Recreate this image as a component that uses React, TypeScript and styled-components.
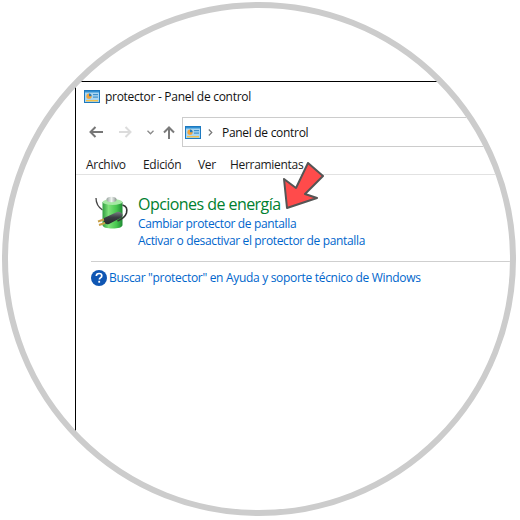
import * as React from "react";
import styled, { createGlobalStyle } from "styled-components";

const GlobalStyle = createGlobalStyle`
  html, body {
    margin: 0;
    background: #fff;
  }
`;

const FONT = `"Open Sans", "Noto Sans", "Liberation Sans", sans-serif`;

const PanelIcon: React.FC = () => (
  <svg width="16" height="13" viewBox="0 0 16 13">
    <rect x="0.5" y="0.5" width="15" height="12" fill="#a9d6f2" stroke="#1c79c0" />
    <rect x="1" y="1" width="14" height="1.5" fill="#2f8fd2" />
    <circle cx="5" cy="6.2" r="2.6" fill="#f2a33a" />
    <path d="M5 6.2V3.6a2.6 2.6 0 0 1 2.6 2.6z" fill="#1c79c0" />
    <rect x="9" y="4" width="5" height="1.2" fill="#3f8fc9" />
    <rect x="9" y="6.5" width="5" height="1.2" fill="#3f8fc9" />
    <rect x="2" y="10" width="12" height="1.4" fill="#f2c14a" />
  </svg>
);

const ArrowLeft: React.FC<{ color: string }> = ({ color }) => (
  <svg width="14" height="12" viewBox="0 0 14 12" fill="none" stroke={color} strokeWidth="2">
    <path d="M14 6H1.5M6.5 1 1.5 6l5 5" />
  </svg>
);

const ArrowRight: React.FC<{ color: string }> = ({ color }) => (
  <svg width="13" height="12" viewBox="0 0 13 12" fill="none" stroke={color} strokeWidth="2">
    <path d="M0 6h11.5M6.5 1l5 5-5 5" />
  </svg>
);

const ChevronDown: React.FC = () => (
  <svg width="7" height="5" viewBox="0 0 7 5" fill="none" stroke="#8a8a8a" strokeWidth="1.3">
    <path d="M.5 .8l3 3 3-3" />
  </svg>
);

const ArrowUp: React.FC = () => (
  <svg width="12" height="13" viewBox="0 0 12 13" fill="none" stroke="#7a7a7a" strokeWidth="2">
    <path d="M6 13V1.5M1 6.5l5-5 5 5" />
  </svg>
);

const CrumbChevron: React.FC = () => (
  <svg width="5" height="7" viewBox="0 0 5 7" fill="none" stroke="#777" strokeWidth="1.2">
    <path d="M.8 .5l3 3-3 3" />
  </svg>
);

const BatteryIcon: React.FC = () => (
  <svg width="36" height="36" viewBox="0 0 36 36">
    <defs>
      <linearGradient id="cell" x1="0" x2="1" y1="0" y2="0">
        <stop offset="0" stopColor="#2f9e3f" />
        <stop offset="0.3" stopColor="#7fe27a" />
        <stop offset="0.7" stopColor="#46c64e" />
        <stop offset="1" stopColor="#1f8a34" />
      </linearGradient>
      <linearGradient id="cap" x1="0" x2="1" y1="0" y2="0">
        <stop offset="0" stopColor="#9aa5a0" />
        <stop offset="0.5" stopColor="#eef2ef" />
        <stop offset="1" stopColor="#8b9690" />
      </linearGradient>
      <linearGradient id="plug" x1="0" x2="0" y1="0" y2="1">
        <stop offset="0" stopColor="#777e82" />
        <stop offset="0.45" stopColor="#3a3f42" />
        <stop offset="1" stopColor="#26292b" />
      </linearGradient>
    </defs>
    <path d="M3 5c0 6 2 9 6.5 12" fill="none" stroke="#444" strokeWidth="1.3" />
    <path d="M9.5 9v23c0 2.5 4.5 3.5 10 3.5s10-1 10-3.5V9z" fill="url(#cell)" />
    <ellipse cx="19.5" cy="9" rx="10" ry="3" fill="#a6e8a4" />
    <ellipse cx="18.5" cy="6.5" rx="5" ry="2.8" fill="url(#cap)" />
    <path d="M29.5 12c4 1 5 4 4 8-1 3-4 6-9 8" fill="none" stroke="#333" strokeWidth="1.6" />
    <path d="M11 25l13-6c2-.8 5 .4 5.5 2.5.4 1.8-.8 3-2.5 3.8L16 31c-2 .8-4.5-.2-5-2.2-.3-1.4-.4-2.8 0-3.8z" fill="url(#plug)" />
    <path d="M11 26.5 5 28.5M12 30 6 32" stroke="#c9a14a" strokeWidth="2" fill="none" />
  </svg>
);

const HelpIcon: React.FC = () => (
  <svg width="16" height="16" viewBox="0 0 16 16">
    <circle cx="8" cy="8" r="8" fill="#0f56b3" />
    <path
      d="M5.3 6.1c0-1.6 1.2-2.6 2.8-2.6s2.7.9 2.7 2.2c0 1.1-.6 1.7-1.4 2.2-.7.5-1 .8-1 1.6"
      fill="none"
      stroke="#fff"
      strokeWidth="1.7"
    />
    <rect x="7.3" y="10.8" width="1.8" height="1.9" fill="#fff" />
  </svg>
);

const App: React.FC = () => (
  <>
    <GlobalStyle />
    <Lens>
      <ExplorerWindow>
        <TitleBar>
          <PanelIcon />
          <TitleText>protector - Panel de control</TitleText>
        </TitleBar>
        <NavBar>
          <NavButtons>
            <NavSlot $width={31}>
              <ArrowLeft color="#777" />
            </NavSlot>
            <NavSlot $width={28}>
              <ArrowRight color="#dcdcdc" />
            </NavSlot>
            <NavSlot $width={23}>
              <ChevronDown />
            </NavSlot>
            <NavSlot $width={14}>
              <ArrowUp />
            </NavSlot>
          </NavButtons>
          <AddressBox>
            <PanelIcon />
            <CrumbChevron />
            <Crumb>Panel de control</Crumb>
          </AddressBox>
        </NavBar>
        <MenuBar>
          <MenuItem $width={57}>Archivo</MenuItem>
          <MenuItem $width={55}>Edición</MenuItem>
          <MenuItem $width={32}>Ver</MenuItem>
          <MenuItem>Herramientas</MenuItem>
        </MenuBar>
        <Results>
          <ResultRow>
            <BatteryIcon />
            <ResultText>
              <Heading>Opciones de energía</Heading>
              <TaskLink>Cambiar protector de pantalla</TaskLink>
              <TaskLink>Activar o desactivar el protector de pantalla</TaskLink>
            </ResultText>
            <Callout viewBox="0 0 44 50" width="44" height="50">
              <path
                d="M4 46 1 17 13 26 25 1l15 13-18 18 12 4z"
                fill="#ff4b4b"
                stroke="#555"
                strokeWidth="2"
                strokeLinejoin="round"
              />
            </Callout>
          </ResultRow>
          <Divider />
          <HelpRow>
            <HelpIcon />
            <HelpLink>Buscar "protector" en Ayuda y soporte técnico de Windows</HelpLink>
          </HelpRow>
        </Results>
      </ExplorerWindow>
    </Lens>
  </>
);

export default App;

const Lens = styled.div`
  box-sizing: border-box;
  width: 514px;
  height: 514px;
  margin: 2px;
  padding: 73px 0 0 67px;
  border: 6px solid #cccccc;
  border-radius: 50%;
  overflow: hidden;
  background: #fff;
  font-family: ${FONT};
`;

const ExplorerWindow = styled.div`
  box-sizing: border-box;
  width: 600px;
  height: 500px;
  display: flex;
  flex-direction: column;
  border-top: 1px solid #000;
  border-left: 1px solid #000;
`;

const TitleBar = styled.div`
  height: 35px;
  box-sizing: border-box;
  padding: 0 0 6px 8px;
  display: flex;
  align-items: center;
  gap: 5px;
`;

const TitleText = styled.span`
  font-size: 12px;
  letter-spacing: -0.28px;
  color: #111;
`;

const NavBar = styled.div`
  height: 30px;
  display: flex;
  align-items: center;
`;

const NavButtons = styled.div`
  width: 106px;
  box-sizing: border-box;
  padding-left: 4px;
  display: flex;
  align-items: center;
`;

const NavSlot = styled.span<{ $width: number }>`
  width: ${(p) => p.$width}px;
  display: flex;
  justify-content: center;
`;

const AddressBox = styled.div`
  flex: 1;
  height: 30px;
  box-sizing: border-box;
  padding-left: 2px;
  display: flex;
  align-items: center;
  gap: 7px;
  border: 1px solid #cccccc;
`;

const Crumb = styled.span`
  margin-left: 2px;
  font-size: 12px;
  letter-spacing: -0.3px;
  color: #111;
`;

const MenuBar = styled.div`
  height: 28px;
  box-sizing: border-box;
  padding: 8px 0 0 10px;
  display: flex;
  align-items: center;
  border-bottom: 1px solid #e2e2e2;
`;

const MenuItem = styled.span<{ $width?: number }>`
  width: ${(p) => (p.$width ? `${p.$width}px` : "auto")};
  font-size: 12px;
  letter-spacing: -0.3px;
  color: #1a1a1a;
`;

const Results = styled.div`
  padding: 18px 0 0 15px;
  display: flex;
  flex-direction: column;
`;

const ResultRow = styled.div`
  position: relative;
  display: flex;
  gap: 9px;
  padding-left: 2px;
`;

const ResultText = styled.div`
  padding-top: 1px;
  display: flex;
  flex-direction: column;
`;

const Heading = styled.span`
  font-size: 16px;
  letter-spacing: -0.55px;
  line-height: 21px;
  color: #00802f;
`;

const TaskLink = styled.span`
  font-size: 12px;
  letter-spacing: -0.35px;
  line-height: 17px;
  color: #0066cc;
`;

const Callout = styled.svg`
  position: absolute;
  left: 192px;
  top: -31px;
`;

const Divider = styled.div`
  margin-top: 12px;
  height: 1px;
  background: #cfcfcf;
`;

const HelpRow = styled.div`
  margin-top: 7px;
  display: flex;
  align-items: center;
  gap: 2px;
`;

const HelpLink = styled.span`
  font-size: 12px;
  letter-spacing: -0.31px;
  color: #0066cc;
`;
